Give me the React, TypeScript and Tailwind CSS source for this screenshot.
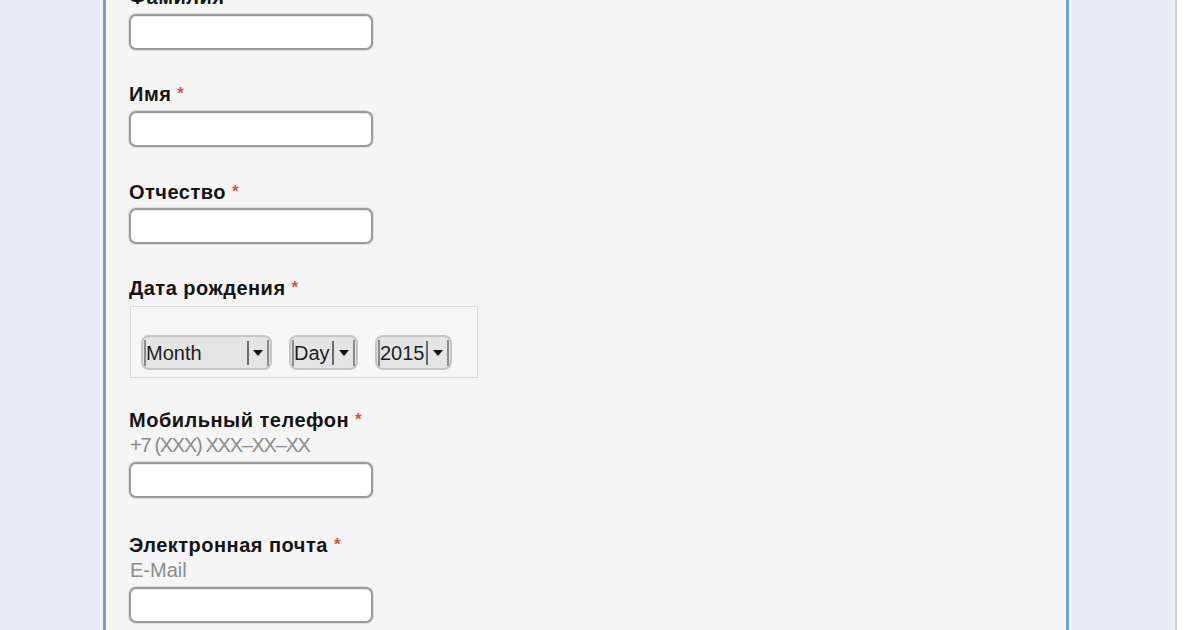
import React from "react";

const font = { fontFamily: '"Liberation Sans", Arial, sans-serif' };

function Label({ text, className = "" }: { text: string; className?: string }) {
  return (
    <div className={"text-[20px] leading-[20px] font-bold text-[#141414] tracking-[0.5px] " + className}>
      {text}
      <span className="ml-[6px] text-[#e0503a] text-[17px] font-bold align-top tracking-normal">*</span>
    </div>
  );
}

function Input({ className = "" }: { className?: string }) {
  return (
    <div
      className={
        "w-[244px] h-[36px] rounded-[7px] border-2 border-[#9b9b9b] bg-white shadow-[0_0_0_1px_#dedede,inset_0_1px_1px_#e8e8e8] " +
        className
      }
    />
  );
}

function Hint({ text, className = "" }: { text: string; className?: string }) {
  return (
    <div className={"text-[20px] leading-[20px] text-[#8c8c8c] pl-[1px] " + className}>{text}</div>
  );
}

function Select({ text, width, textW }: { text: string; width: string; textW: string }) {
  return (
    <div className={"h-[35px] rounded-[8px] border-2 border-[#c4c4c4] bg-[#e4e4e4] flex items-center px-[1px] " + width}>
      <div className="flex items-center h-[26px] w-full border-l-2 border-r-2 border-[#8a8a8a]">
        <div className={"text-[20px] leading-[20px] text-[#1e1e1e] " + textW}>{text}</div>
        <div className="w-[2px] h-[24px] bg-[#6a6a6a]" />
        <div className="flex-1 flex items-center justify-center">
          <div className="w-0 h-0 border-l-[5px] border-r-[5px] border-t-[6px] border-l-transparent border-r-transparent border-t-[#111]" />
        </div>
      </div>
    </div>
  );
}

export default function App() {
  return (
    <div className="w-[1200px] h-[630px] overflow-hidden flex bg-white" style={font}>
      <div className="w-[100px] bg-[#e5ecf6]" />
      <div className="w-[3px] bg-[#eef3fa]" />
      <div className="w-[3px] bg-[#72a1d2]" />
      <main className="w-[960px] bg-[#f5f5f5] border-l border-r border-[#fbfbfb] overflow-hidden pl-[22px]">
        <Label text="Фамилия" className="mt-[-13px]" />
        <Input className="mt-[7px]" />

        <Label text="Имя" className="mt-[34px]" />
        <Input className="mt-[7px]" />

        <Label text="Отчество" className="mt-[35px]" />
        <Input className="mt-[6px]" />

        <Label text="Дата рождения" className="mt-[34px]" />
        <div className="mt-[8px] ml-[1px] w-[348px] h-[72px] border border-[#dadada] bg-[#f6f6f6] flex items-end gap-[17px] pl-[10px] pb-[7px]">
          <Select text="Month" width="w-[131px]" textW="w-[101px]" />
          <Select text="Day" width="w-[69px]" textW="w-[38px]" />
          <Select text="2015" width="w-[77px]" textW="w-[46px]" />
        </div>

        <Label text="Мобильный телефон" className="mt-[32px]" />
        <Hint text="+7 (XXX) XXX–XX–XX" className="mt-[5px] tracking-[-1.3px]" />
        <Input className="mt-[7px]" />

        <Label text="Электронная почта" className="mt-[37px]" />
        <Hint text="E-Mail" className="mt-[5px]" />
        <Input className="mt-[7px]" />
      </main>
      <div className="w-[3px] bg-[#72a1d2]" />
      <div className="w-[3px] bg-[#eef3fa]" />
      <div className="w-[101px] bg-[#e5ecf6]" />
      <div className="w-[2px] bg-[#eef1f5]" />
      <div className="w-[2px] bg-[#cfcfcf]" />
      <div className="w-[23px] bg-white" />
    </div>
  );
}
